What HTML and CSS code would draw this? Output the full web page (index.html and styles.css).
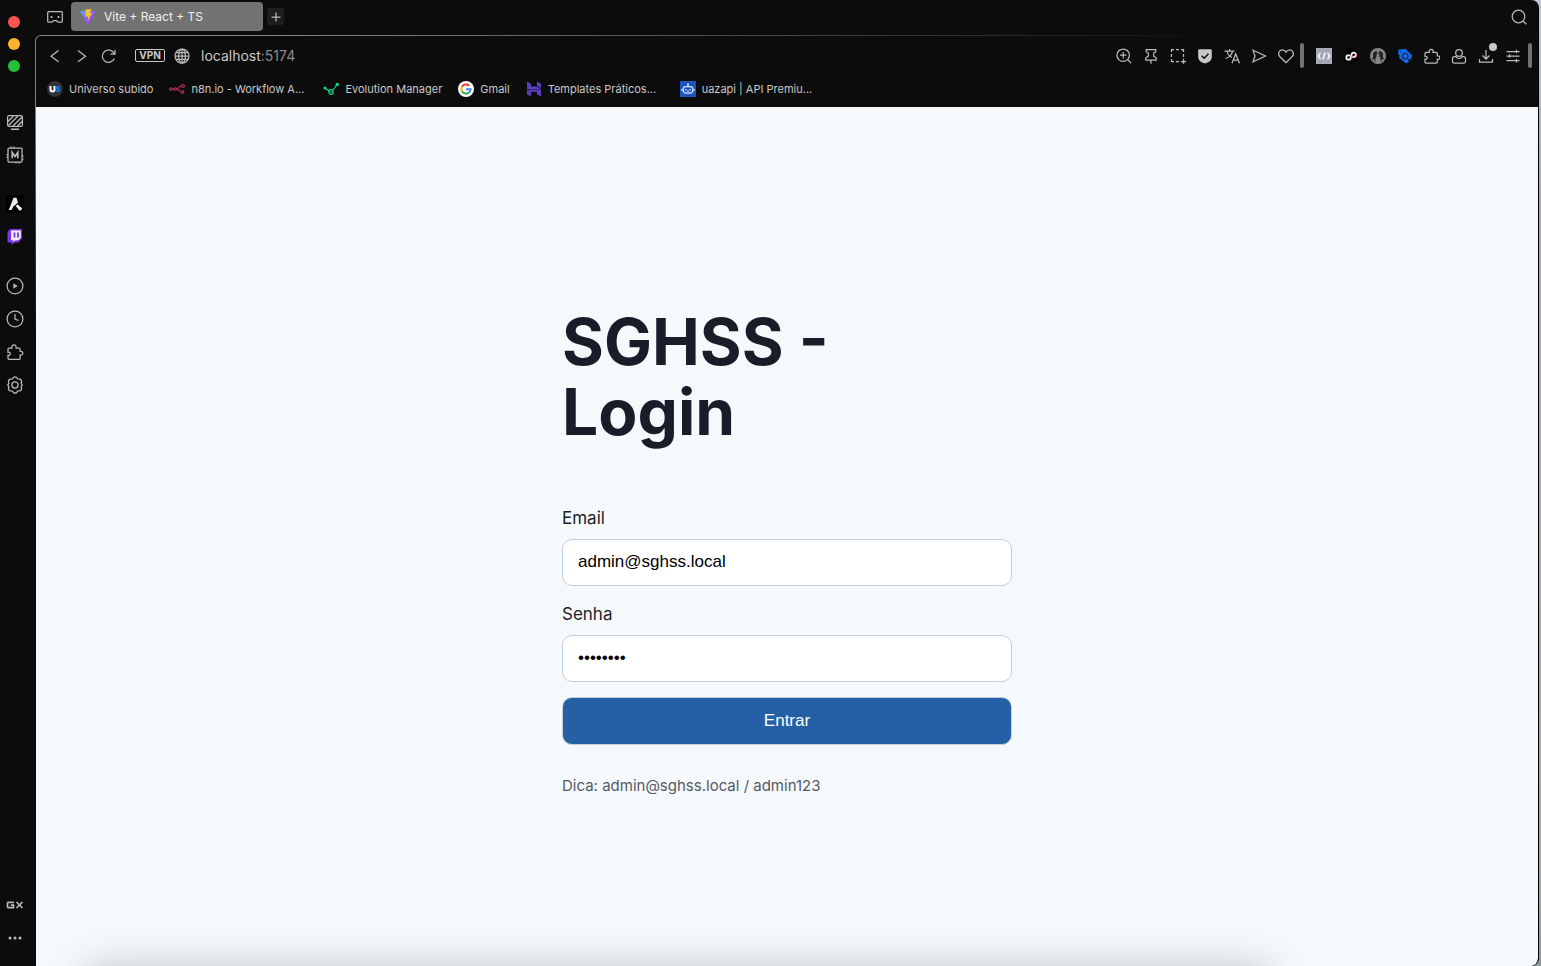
FILE: index.html
```html
<!DOCTYPE html>
<html lang="pt-BR">
<head>
<meta charset="utf-8">
<title>Vite + React + TS</title>
<link rel="stylesheet" href="styles.css">
</head>
<body>
<div class="window">
  <aside class="sidebar">
    <div class="lights">
      <button class="light red" aria-label="Fechar"></button>
      <button class="light yellow" aria-label="Minimizar"></button>
      <button class="light green" aria-label="Ampliar"></button>
    </div>
    <div class="side-group first">
      <button class="side-icon" aria-label="GX Corner"><svg viewBox="0 0 18 18"><rect x="1.6" y="2.6" width="14.8" height="10.8" rx="1.5"/><path d="M5 16.3h8M2 8.500 7.500 3M2.500 12.500 12 3M7 13l9-9M11.500 13l4.500-4.500" stroke-width="1.4"/></svg></button>
      <button class="side-icon" aria-label="Mods"><svg viewBox="0 0 18 18"><rect x="2" y="2" width="14" height="14" rx="1"/><path d="M5 .5V2M8 .5V2M.5 8.500H2M.5 11H2M16 10h1.500M16 13h1.500M10 16v1.500M13 16v1.500"/><path d="M6.200 12.200V6.500L9 10.500l2.800-4v5.700" stroke-width="1.700"/></svg></button>
    </div>
    <div class="side-group">
      <button class="side-icon" aria-label="Aria"><svg viewBox="0 0 18 18"><rect width="18" height="18" rx="2" fill="#000" stroke="none"/><path d="M7.500 2.800h3l1.500 5-4.500 3.500L5.500 15H2.800z" fill="#eee" stroke="none"/><path d="M9.500 10.800l2.300-1.400 4.200 3.800-.8 2-1.900.2z" fill="#eee" stroke="none"/></svg></button>
      <button class="side-icon" aria-label="Twitch"><svg viewBox="0 0 18 18"><path d="M4 1h12v9.500L12 14.500H8.500L5.500 17v-2.500H1.500V4z" fill="#7c35e8" stroke="none"/><path d="M5 2.500h9.800V10l-2.300 2.200H9.500l-2 1.800v-1.800H5z" fill="#eee" stroke="none"/><path d="M8.500 4.500v5M12 4.500v5" stroke="#7c35e8" stroke-width="1.800"/></svg></button>
    </div>
    <div class="side-group">
      <button class="side-icon" aria-label="Player"><svg viewBox="0 0 18 18"><circle cx="9" cy="9" r="7.900"/><path d="M7.300 6.300 11.800 9l-4.500 2.700z" fill="#b5b5b5" stroke="none"/></svg></button>
      <button class="side-icon" aria-label="Histórico"><svg viewBox="0 0 18 18"><circle cx="9" cy="9" r="7.900"/><path d="M9 4v5l3.500 1.500"/></svg></button>
      <button class="side-icon" aria-label="Extensões"><svg viewBox="0 0 18 18"><path d="M3 16.300q-1 0-1-1v-3c3 .5 3-3.600 0-3V6q0-1 1-1h2.900c-.8-4.300 5-4.300 4.200 0h3q1 0 1 1v2.300c3.600-.5 3.600 4.200 0 3.800v3.200q0 1-1 1z"/></svg></button>
      <button class="side-icon" aria-label="Configurações"><svg viewBox="0 0 18 18"><path d="M7.500 1.400Q9 .5 10.500 1.400L11.700 3l2.100.2q1.700.7 1.800 2.200l-.5 1.900 1.200 1.700-1.200 1.700.5 1.900q-.1 1.500-1.800 2.200l-2.100.2-1.200 1.600q-1.500.9-3 0L6.300 15l-2.100-.2q-1.700-.7-1.800-2.200l.5-1.900L1.700 9l1.200-1.700-.5-1.900q.1-1.500 1.800-2.200L6.300 3z"/><circle cx="9" cy="9" r="3.100"/></svg></button>
    </div>
    <div class="side-group last">
      <button class="side-icon" aria-label="GX"><svg viewBox="0 0 18 18"><path d="M8 6.300H2.500q-1 0-1 1v3.400q0 1 1 1H7.500V9.200H4.800M10.500 6l6 6M16.500 6l-6 6" stroke-width="1.700"/></svg></button>
      <button class="side-icon" aria-label="Mais"><svg viewBox="0 0 18 18"><path d="M4 9h.01M9 9h.01M14 9h.01" stroke-width="3" stroke-linecap="round"/></svg></button>
    </div>
  </aside>

  <div class="main">
    <header class="tabbar">
      <button class="tab-icon" aria-label="Espaço"><svg viewBox="0 0 16 16"><path d="M1.700 2.700h12.600q1 0 1 1v8.500q0 1-1 1H11L9.500 11.500h-3L5 13.200H1.700q-1 0-1-1V3.700q0-1 1-1z"/><path d="M4.500 7v2M11.500 7v2M3.500 8h2M10.500 8h2"/></svg></button>
      <button class="tab">
        <svg viewBox="0 0 16 16"><defs><linearGradient id="vite-a" x1="0" y1="0" x2="1" y2="1"><stop offset="0" stop-color="#41b8ff"/><stop offset=".6" stop-color="#9b4dff"/><stop offset="1" stop-color="#bd34fe"/></linearGradient></defs><path d="M.2 2.200 8 .9l7.800 1.300L8 16z" fill="url(#vite-a)" stroke="none"/><path d="M5.500.6 11.400 0 10 4.300l2.200-.4-4.400 8 .4-4.700-2.700.5z" fill="#ffc41f" stroke="none"/></svg>
        <span>Vite + React + TS</span>
      </button>
      <button class="new-tab" aria-label="Nova aba"><svg viewBox="0 0 16 16"><path d="M8 3.500v9M3.500 8h9"/></svg></button>
      <button class="tab-icon search" aria-label="Pesquisar"><svg viewBox="0 0 16 16"><circle cx="7.500" cy="7.500" r="6.300"/><path d="m12 12 3.300 3.300"/></svg></button>
    </header>

    <div class="frame">
      <div class="panel">
        <nav class="toolbar" aria-label="Navegação">
          <button class="tool" aria-label="Voltar"><svg viewBox="0 0 16 16"><path d="M11.500 2.500 4 8.200l7.500 5.600"/></svg></button>
          <button class="tool" aria-label="Avançar"><svg viewBox="0 0 16 16"><path d="m4 2.500 7.500 5.700L4 13.800"/></svg></button>
          <button class="tool" aria-label="Recarregar"><svg viewBox="0 0 16 16"><path d="M13.300 10.500a6.200 6.200 0 1 1-.2-5M14 1.700v4.500H9.500"/></svg></button>
          <button class="vpn">VPN</button>
          <button class="tool globe" aria-label="Site"><svg viewBox="0 0 16 16"><circle cx="8" cy="8" r="7"/><ellipse cx="8" cy="8" rx="3.400" ry="7"/><path d="M8 1v14M1 8h14M2 4.600h12M2 11.400h12"/></svg></button>
          <div class="url">localhost<span>:5174</span></div>
          <button class="tool" aria-label="Zoom"><svg viewBox="0 0 16 16"><circle cx="7.200" cy="7.200" r="6.200"/><path d="M7.200 4v6.400M4 7.200h6.400M11.800 11.800l3.300 3.300"/></svg></button>
          <button class="tool" aria-label="Fixar"><svg viewBox="0 0 16 16"><path d="M3.200 1.500h9.600v2.200L10.700 5v3.200l2.500 1.600V12H2.800V9.800l2.500-1.600V5L3.200 3.700zM8 12v3.700"/></svg></button>
          <button class="tool" aria-label="Captura"><svg viewBox="0 0 16 16"><path d="M1.500 4V1.500H4M6 1.500h3M11 1.500h2.500V4M1.500 6v3M1.500 11v2.500H4M6 13.500h3M13.500 6v3M13.500 10.800v5M11 13.500h5"/></svg></button>
          <button class="tool" aria-label="Bloqueador"><svg viewBox="0 0 16 16"><path d="M1.200 2.500q0-1.300 1.300-1.300h11q1.300 0 1.300 1.300v6c0 4-3 6-6.800 7-3.800-1-6.800-3-6.800-7z" fill="#c8c8c8" stroke="none"/><path d="m4.700 7.800 2.500 2.500 4.300-4.500" stroke="#0c0c0c" stroke-width="1.500"/></svg></button>
          <button class="tool" aria-label="Traduzir"><svg viewBox="0 0 16 16"><path d="M.5 3h10M5.500 1v2M8.500 3C8 6.500 5 9.500 1.500 10.500M3 3c.5 3 3 5.500 5 6.500M8 15.300 11.700 6l3.800 9.300M9.200 12.200h5"/></svg></button>
          <button class="tool" aria-label="My Flow"><svg viewBox="0 0 16 16"><path d="M2 2.200 14.500 8 2 13.800 4 8z"/></svg></button>
          <button class="tool" aria-label="Favoritos"><svg viewBox="0 0 16 16"><path d="M8 14.700 2 8.800C-.9 5.800 1.300 1.900 4.200 1.900 6 1.900 7.300 2.800 8 4.200c.7-1.400 2-2.300 3.800-2.300 2.900 0 5.100 3.900 2.200 6.900z"/></svg></button>
          <span class="divider"></span>
          <div class="extensions">
            <button class="tool" aria-label="Código"><svg viewBox="0 0 16 16"><path d="M0 0h16v16H0z" fill="#a4a9b5" stroke="none"/><path d="M4.500 5 2 8l2.500 3M11.500 5 14 8l-2.500 3M9 4.500l-2 7" stroke="#fff" stroke-width="1.400"/></svg></button>
            <button class="tool" aria-label="Vídeo"><svg viewBox="0 0 16 16"><circle cx="8" cy="8" r="8" fill="#000" stroke="none"/><g stroke-linecap="round" stroke-width="1.500"><path id="clip-link" d="M6.300 7.200H5.200a2.200 2.200 0 1 0 2.300 2.400L8.500 6a2.200 2.200 0 1 1 2.300 2.900H9.700" stroke="#f04e65" transform="translate(.7 .5)"/><path d="M6.300 7.200H5.200a2.200 2.200 0 1 0 2.300 2.400L8.500 6a2.200 2.200 0 1 1 2.300 2.900H9.700" stroke="#e0ffff"/></g></svg></button>
            <button class="tool" aria-label="Pinos"><svg viewBox="0 0 16 16"><circle cx="8" cy="8" r="8" fill="#858585" stroke="none"/><path d="M6.200 3v5.500L5.200 10v1H2.500l1-2V5zM9.800 3v5.500l1 1.500v1h2.700l-1-2V5zM4.800 11v3M11.200 11v3M6.200 5h3.600" fill="#222" stroke="#222" stroke-width=".8"/></svg></button>
            <button class="tool" aria-label="Etiquetas"><svg viewBox="0 0 16 16"><path d="M1.200 1.800 8.500.8l6.800 7-1 1.500.5 2-5.300 4.200-2-1.200L2 9.500l.7-1.800-1.500-1.500z" fill="#126bed" stroke="none"/><circle cx="8.300" cy="8.200" r="2.800" stroke="#0c0c0c" stroke-width="1"/><path d="M4 4h.01M11.500 12.500l2-1.500" stroke="#0c0c0c" stroke-width="1.200" stroke-linecap="round"/></svg></button>
            <button class="tool" aria-label="Extensões"><svg viewBox="0 0 16 16"><path d="M2 15q-1 0-1-1v-2.800c3 .5 3-3.300 0-2.800V5.300q0-1 1-1h3.300c-.8-4 4.500-4 3.800 0h3.200q1 0 1 1v2.500c3.500-.4 3.500 4 0 3.500V14q0 1-1 1z"/></svg></button>
            <button class="tool" aria-label="Perfil"><svg viewBox="0 0 16 16"><circle cx="8" cy="5" r="3.300"/><path d="M4.900 8.500H3.500Q1.500 8.500 1.500 10.500v3q0 1.500 1.500 1.500h10q1.500 0 1.500-1.500v-3q0-2-2-2h-1.400C9.800 11.300 6.200 11.300 4.900 8.500z"/></svg></button>
            <button class="tool downloads" aria-label="Downloads"><svg viewBox="0 0 16 16"><path d="M8 2v9M4.500 7.500 8 11l3.500-3.500M1.500 11v3h13v-3"/></svg><span class="badge"></span></button>
            <button class="tool" aria-label="Menu"><svg viewBox="0 0 16 16"><path d="M1.500 3.500h13M1.500 8h13M1.500 12.700h13M11.500 1.700v3.500M4.500 6.200v3.500M11.500 11v3.500"/></svg></button>
          </div>
          <span class="divider"></span>
        </nav>

        <nav class="bookmarks" aria-label="Favoritos">
          <a href="#"><svg viewBox="0 0 16 16"><circle cx="8" cy="8" r="8" fill="#303238" stroke="none"/><path d="M3.500 5v3.500q0 2 2 2t2-2V5" stroke="#fff" stroke-width="2"/><path d="M13 5.900H10.500q-1.100 0-1.100.9t1.500 1q1.800.2 1.800 1.200T11.500 10.200H8.800" stroke="#1677e8" stroke-width="1.700"/></svg>Universo subido</a>
          <a href="#" class="cut"><svg viewBox="0 0 16 16"><g stroke="#a72d4c" stroke-width="1.300"><circle cx="1.900" cy="8" r="1.200"/><circle cx="6.300" cy="8" r="1.200"/><circle cx="14" cy="5" r="1.400"/><circle cx="13.500" cy="11" r="1.300"/><path d="M3 8h2M7.500 8c3.300 0 1.300-3 5-3M7.500 8c3.300 0 1.700 3 4.700 3"/></g></svg>n8n.io - Workflow A...</a>
          <a href="#"><svg viewBox="0 0 16 16"><g stroke="#12d98b" stroke-width="1.200"><path d="M2 7.300 6.500 10M10 9l3.800-5"/><circle cx="8" cy="11" r="2.300"/><path d="M7 11h2"/></g><circle cx="2" cy="7" r="1.500" fill="#12d98b" stroke="none"/><circle cx="14.200" cy="3.500" r="1.700" fill="#12d98b" stroke="none"/></svg>Evolution Manager</a>
          <a href="#"><svg viewBox="0 0 16 16"><circle cx="8" cy="8" r="8" fill="#fff" stroke="none"/><g stroke-width="2.100"><path d="M4 5.700A4.600 4.600 0 0 1 11.300 4.800" stroke="#ea4335"/><path d="M4 10.300a4.600 4.600 0 0 1 0-4.600" stroke="#fbbc05"/><path d="M11 11.500a4.600 4.600 0 0 1-7-1.200" stroke="#34a853"/><path d="M8 8.200h4.600a4.600 4.600 0 0 1-1.600 3.300" stroke="#4285f4"/></g></svg>Gmail</a>
          <a href="#" class="cut"><svg viewBox="0 0 16 16"><path d="M1 .5 5 2.800V5.500h6L15 8H1zM11 .5l4 2.300V7l-4-2.300zM1 9l4 2v4.500L1 13.300zM1 8.600h14v6.900l-4-2.300v-2.500H5z" fill="#5b3fc4" stroke="none"/></svg>Templates Práticos...</a>
          <a href="#"><svg viewBox="0 0 16 16"><path d="M0 0h16v16H0z" fill="#1c55bd" stroke="none"/><g stroke="#d6e6ff"><rect x="3.200" y="5.500" width="9.600" height="6.500" rx="2.500"/><path d="M8 3v2.500M7 3h2M2 8v2M14 8v2M5.800 8v1.500M10.200 8v1.500M7 10h2"/></g></svg>uazapi | API Premiu...</a>
        </nav>

        <main class="page">
          <form class="login">
            <h1>SGHSS - Login</h1>
            <label for="email">Email</label>
            <input id="email" type="email" value="admin@sghss.local">
            <label for="senha">Senha</label>
            <input id="senha" type="password" value="admin123">
            <button class="submit" type="button">Entrar</button>
            <p>Dica: admin@sghss.local / admin123</p>
          </form>
        </main>
      </div>
    </div>
  </div>
</div>
</body>
</html>
```
FILE: styles.css
```css
* { box-sizing: border-box; }

body {
  margin: 0;
  background: linear-gradient(#c3c9d3, #a9abae 20%, #a5a7a9 90%, #8b9b99);
  font-family: Inter, "Liberation Sans", sans-serif;
}

button {
  margin: 0;
  padding: 0;
  border: 0;
  background: none;
  color: inherit;
  font: inherit;
}

svg {
  display: block;
  flex: none;
  width: 16px;
  height: 16px;
  fill: none;
  stroke: #bababa;
  stroke-width: 1.25;
}

.window {
  display: flex;
  min-height: 100vh;
  margin-right: 2px;
  overflow: hidden;
  border-right: 1px solid #000;
  border-radius: 0 8px 8px 0;
  background: #0c0c0c;
  color: #c8c8c8;
}

/* Sidebar */
.sidebar {
  display: flex;
  flex: none;
  flex-direction: column;
  width: 35px;
  padding: 16px 5px 19px 6px;
}

.lights {
  display: flex;
  flex-direction: column;
  gap: 10px;
  padding-left: 2px;
}

.light {
  width: 12px;
  height: 12px;
  border-radius: 50%;
}

.red { background: #ff5450; }
.yellow { background: #ffb429; }
.green { background: #25c138; }

.side-group {
  display: flex;
  flex-direction: column;
  gap: 15px;
  margin-top: 31px;
}

.side-group.first { margin-top: 41px; }
.side-group.last { margin-top: auto; }

.side-icon,
.side-icon svg {
  width: 18px;
  height: 18px;
}

/* Tabs */
.main {
  display: flex;
  flex: 1;
  flex-direction: column;
  min-width: 0;
}

.tabbar {
  display: flex;
  align-items: center;
  height: 35px;
  padding: 0 11px 2px 12px;
}

.tab {
  display: flex;
  align-items: center;
  gap: 8px;
  width: 192px;
  height: 29px;
  margin: 0 4px 0 8px;
  padding: 0 9px;
  border-radius: 4px;
  background: #727272;
  color: #f0f0f0;
  font-size: 12px;
}

.new-tab {
  display: grid;
  place-items: center;
  width: 17px;
  height: 17px;
  border-radius: 3px;
  background: #1e1e1e;
}

.search { margin-left: auto; }

/* Browser panel with a hairline that fades out from its top left corner */
.frame {
  display: flex;
  flex: 1;
  padding: 1px 0 0 1px;
  border-radius: 6px 0 0 0;
  background: radial-gradient(1200px 300px at 0 0, #858585 20%, #0c0c0c);
}

.panel {
  display: flex;
  flex: 1;
  flex-direction: column;
  min-width: 0;
  border-radius: 5px 0 0 0;
  background: #0c0c0c;
}

.toolbar {
  display: flex;
  align-items: center;
  height: 39px;
  padding: 0 6px 0 5px;
}

.tool {
  display: grid;
  flex: none;
  place-items: center;
  width: 27px;
  height: 27px;
}

.vpn {
  width: 30px;
  height: 13px;
  margin: 0 3px 0 13px;
  border: 1px solid #c8c8c8;
  border-radius: 2px;
  font-size: 10px;
  font-weight: 700;
  line-height: 11px;
}

.url {
  flex: 1;
  margin-left: 6px;
  font-size: 14px;
}

.url span { color: #8c8c8c; }

.divider {
  width: 4px;
  height: 25px;
  margin: 0 1px;
  border-radius: 2px;
  background: #727272;
}

.divider:last-child { margin-right: 0; }

.extensions {
  display: flex;
  margin: 0 1px 0 5px;
}

.downloads { position: relative; }

.badge {
  position: absolute;
  top: 1px;
  right: 2px;
  width: 8px;
  height: 8px;
  border-radius: 50%;
  background: #c8c8c8;
}

.bookmarks {
  display: flex;
  align-items: center;
  gap: 16px;
  height: 32px;
  padding: 0 11px 5px;
}

.bookmarks a {
  display: flex;
  align-items: center;
  gap: 6px;
  color: #c8c8c8;
  font-size: 11px;
  text-decoration: none;
  white-space: nowrap;
}

.bookmarks .cut { width: 138px; }

/* Login page */
.page {
  position: relative;
  display: grid;
  flex: 1;
  place-items: center;
  overflow: hidden;
  border-radius: 0 0 7px 0;
  background: #f5f9fc;
  color: #1a1d29;
}

.page::after {
  content: "";
  position: absolute;
  top: 100%;
  left: 50px;
  right: 270px;
  height: 40px;
  box-shadow: 0 6px 40px rgb(0 0 0 / 28%);
}

.login {
  display: flex;
  flex-direction: column;
  width: 450px;
  font-size: 17px;
}

.login h1 {
  margin: 43px 0 58px;
  font-size: 64px;
  font-weight: 700;
  line-height: 70px;
}

.login label {
  margin-bottom: 8px;
  line-height: 26px;
}

.login input {
  height: 47px;
  margin-bottom: 15px;
  padding: 0 15px;
  border: 1px solid #c3cfdc;
  border-radius: 10px;
  background: #fff;
  color: #000;
  font: 17px "Liberation Sans", Arial, sans-serif;
}

.login .submit {
  height: 48px;
  border: 1px solid #c3cfdc;
  border-radius: 10px;
  background: #2560a6;
  color: #fff;
  font: 17px "Liberation Sans", Arial, sans-serif;
}

.login p {
  margin: 29px 0 12px;
  color: #555963;
  font-size: 15px;
  line-height: 24px;
}
```
